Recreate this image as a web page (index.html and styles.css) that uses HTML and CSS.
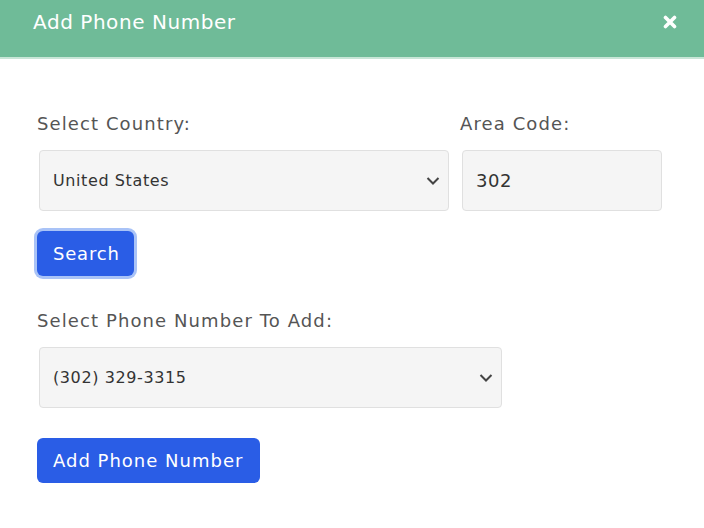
FILE: index.html
```html
<!DOCTYPE html>
<html>
<head>
<meta charset="utf-8">
<link rel="stylesheet" href="styles.css">
</head>
<body>
<div class="modal">
  <div class="modal-header">
    <span class="title">Add Phone Number</span>
    <svg class="close" width="14" height="14" viewBox="0 0 14 14"><path d="M2.5 2.5 L11.5 11.5 M11.5 2.5 L2.5 11.5" stroke="#fff" stroke-width="3.6" stroke-linecap="round"/></svg>
  </div>
  <div class="modal-body">
    <div class="row">
      <div class="field country">
        <label class="label">Select Country:</label>
        <div class="select">
          <span>United States</span>
          <svg class="chev" width="14" height="10" viewBox="0 0 14 10"><path d="M1.5 2 L7 7.5 L12.5 2" fill="none" stroke="#444" stroke-width="2"/></svg>
        </div>
      </div>
      <div class="field area">
        <label class="label">Area Code:</label>
        <div class="input">302</div>
      </div>
    </div>
    <button class="btn focus">Search</button>
    <div class="field phone">
      <label class="label">Select Phone Number To Add:</label>
      <div class="select">
        <span>(302) 329-3315</span>
        <svg class="chev" width="14" height="10" viewBox="0 0 14 10"><path d="M1.5 2 L7 7.5 L12.5 2" fill="none" stroke="#444" stroke-width="2"/></svg>
      </div>
    </div>
    <button class="btn add">Add Phone Number</button>
  </div>
</div>
</body>
</html>
```
FILE: styles.css
```css
html, body {
  margin: 0;
  padding: 0;
  background: #fff;
  font-family: "DejaVu Sans", sans-serif;
}
.modal-header {
  height: 59px;
  background: #6fbb98;
  border-bottom: 2px solid #c8e6d7;
  display: flex;
  align-items: center;
  justify-content: space-between;
  padding: 0 27px 14px 33px;
  box-sizing: border-box;
}
.title {
  color: #fff;
  font-size: 20px;
  letter-spacing: 0.55px;
}
.close {
  display: block;
}
.modal-body {
  padding: 0 0 0 37px;
}
.row {
  display: flex;
  gap: 11px;
  margin-top: 54px;
}
.field {
  display: flex;
  flex-direction: column;
}
.label {
  color: #555;
  font-size: 18px;
  letter-spacing: 1.1px;
  height: 28px;
  margin-bottom: 9px;
}
.select, .input {
  margin-left: 2px;
  height: 61px;
  box-sizing: border-box;
  background: #f5f5f5;
  border: 1px solid #e0e0e0;
  border-radius: 4px;
  display: flex;
  align-items: center;
  color: #333;
}
.select {
  justify-content: space-between;
  padding: 0 8px 0 13px;
  font-size: 16px;
  letter-spacing: 0.6px;
}
.input {
  padding: 0 13px;
  font-size: 18px;
  letter-spacing: 0.5px;
}
.country .select { width: 410px; }
.area .input { width: 200px; }
.phone { margin-top: 34px; }
.phone .select { width: 463px; }
.btn {
  display: block;
  border: none;
  background: #2a5de6;
  color: #fff;
  font-family: "DejaVu Sans", sans-serif;
  font-size: 18px;
  letter-spacing: 0.8px;
  height: 45px;
  border-radius: 6px;
  padding: 0 16px;
  text-align: left;
}
.focus {
  margin-top: 20px;
  width: 97px;
  box-shadow: 0 0 0 3px #a9c3f7;
}
.add {
  margin-top: 30px;
  width: 223px;
  letter-spacing: 1px;
}
```
